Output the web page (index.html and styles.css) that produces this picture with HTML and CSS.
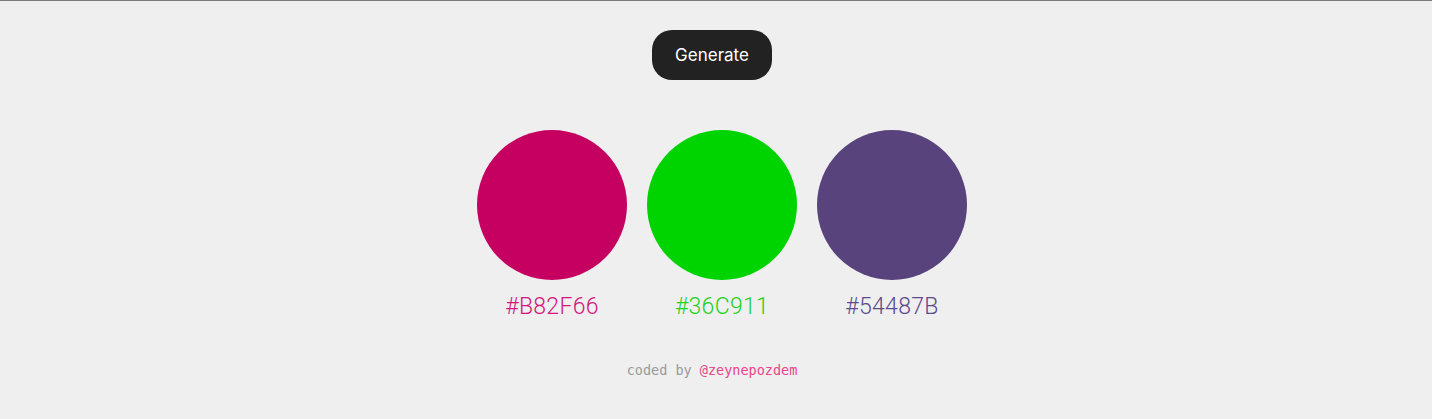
FILE: index.html
```html
<!DOCTYPE html>
<html>
<head>
<meta charset="utf-8">
<link rel="stylesheet" href="styles.css">
</head>
<body>
<main class="page">
  <button class="generate">Generate</button>
  <div class="palette">
    <div class="swatch">
      <div class="circle c1"></div>
      <div class="hex t1">#B82F66</div>
    </div>
    <div class="swatch">
      <div class="circle c2"></div>
      <div class="hex t2">#36C911</div>
    </div>
    <div class="swatch">
      <div class="circle c3"></div>
      <div class="hex t3">#54487B</div>
    </div>
  </div>
  <footer class="credit">coded by <span class="handle">@zeynepozdem</span></footer>
</main>
</body>
</html>
```
FILE: styles.css
```css
html, body {
  margin: 0;
  padding: 0;
}
html {
  background: #efefef;
  border-top: 1px solid #7b7b7b;
}
body {
  height: 418px;
  width: 1424px;
}
.page {
  display: flex;
  flex-direction: column;
  align-items: center;
  padding-top: 29px;
}
.generate {
  width: 120px;
  height: 50px;
  border: none;
  border-radius: 20px;
  background: #222222;
  color: #ffffff;
  font-family: "Inter", sans-serif;
  font-size: 17px;
  font-weight: 400;
  cursor: pointer;
}
.palette {
  display: flex;
  margin-top: 50px;
  padding-left: 20px;
  gap: 20px;
}
.swatch {
  display: flex;
  flex-direction: column;
  align-items: center;
  width: 150px;
}
.circle {
  width: 150px;
  height: 150px;
  border-radius: 50%;
}
.c1 { background: #c60060; }
.c2 { background: #00d400; }
.c3 { background: #58437d; }
.hex {
  margin-top: 13px;
  font-family: "Roboto", sans-serif;
  font-weight: 300;
  font-size: 23px;
  letter-spacing: 0.3px;
}
.t1 { color: #d4167a; }
.t2 { color: #22d11c; }
.t3 { color: #5b4a8c; }
.credit {
  margin-top: 42px;
  font-family: "DejaVu Sans Mono", monospace;
  font-size: 13.5px;
  color: #9a9a9a;
}
.handle {
  color: #e8458a;
}
```
